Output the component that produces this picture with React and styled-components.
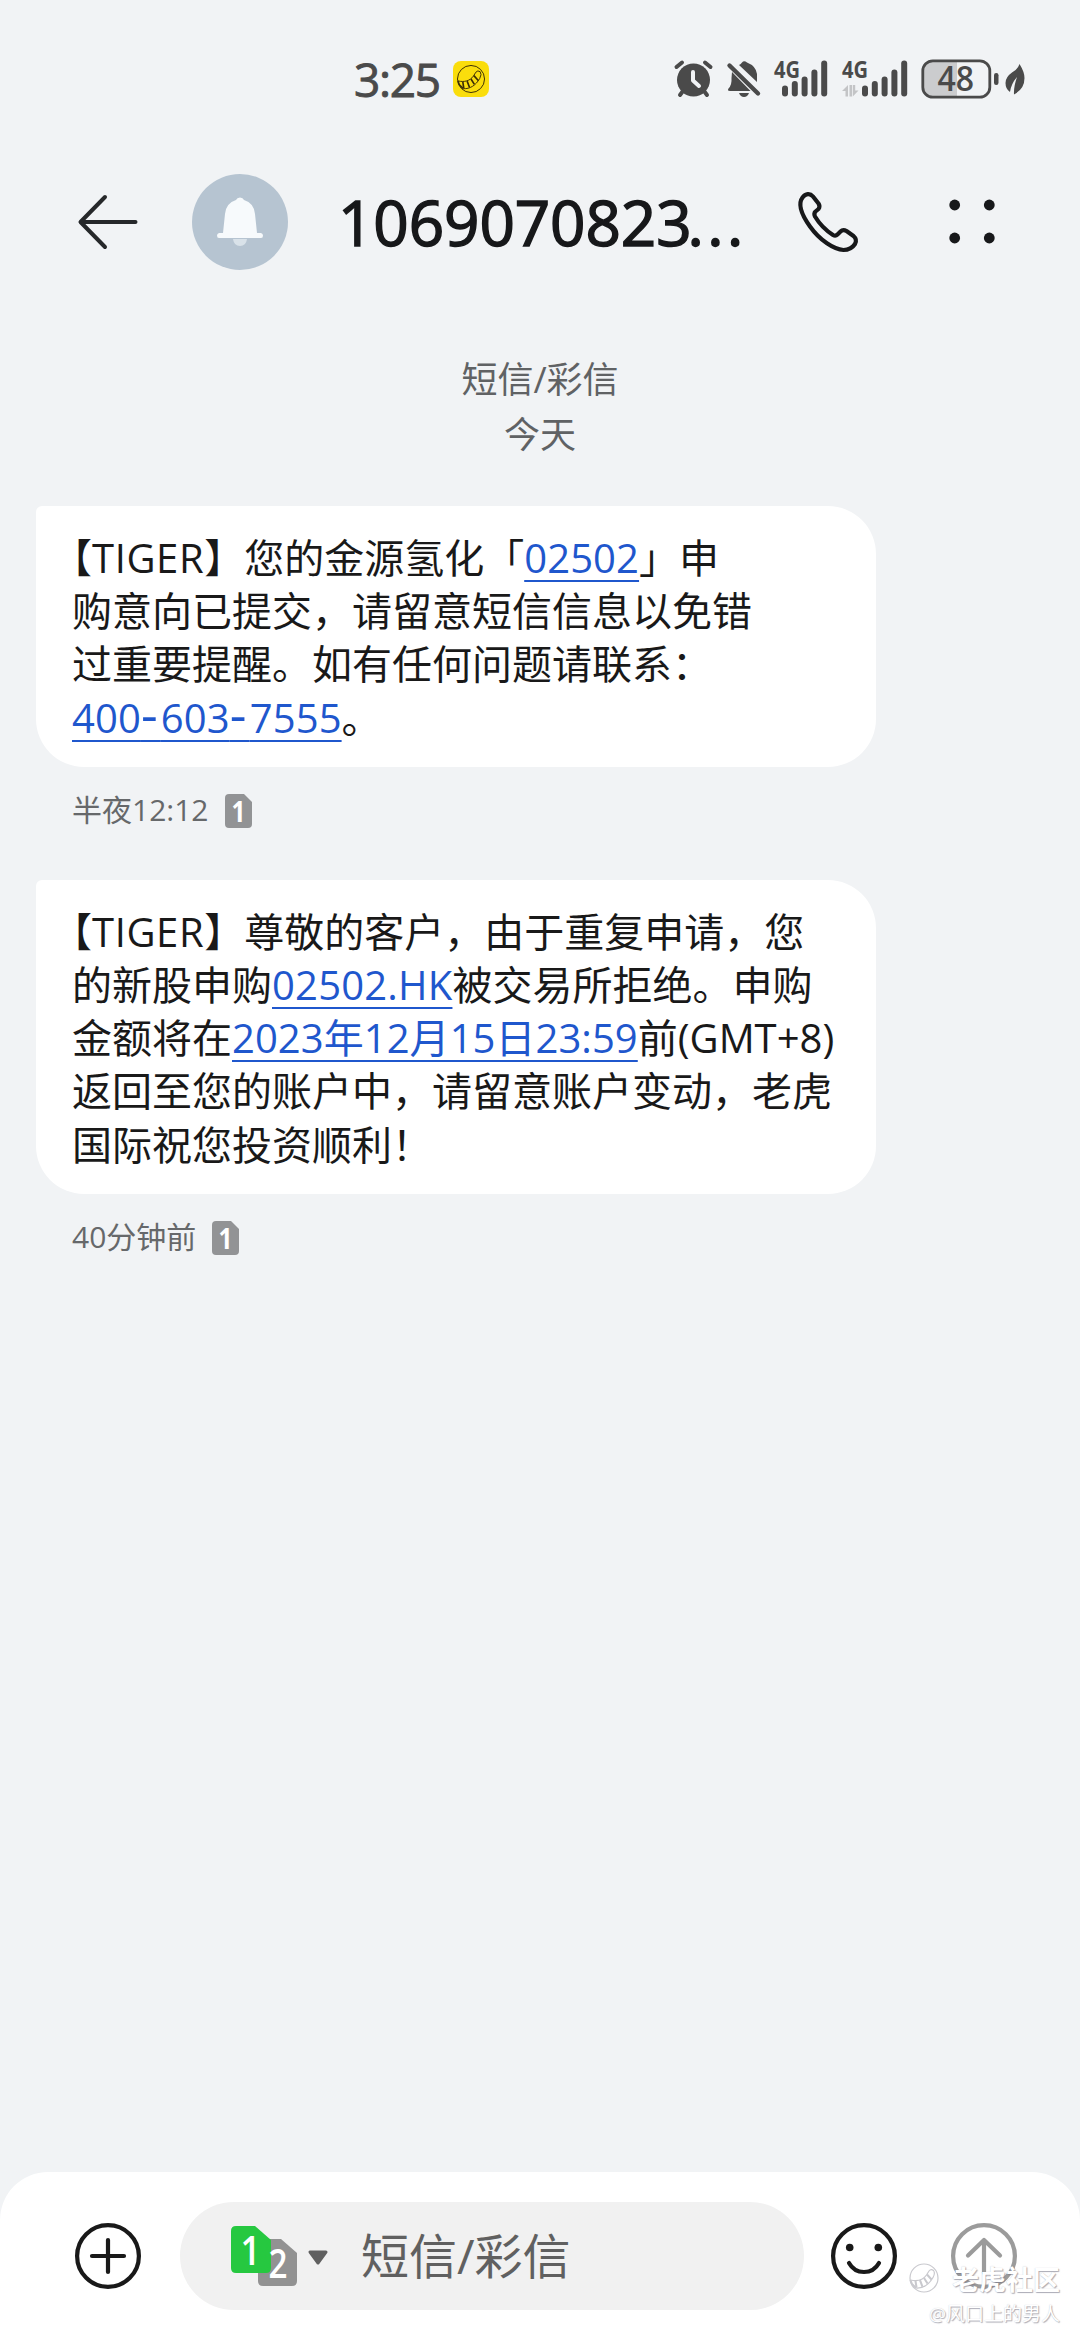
import React from 'react';
import styled, { createGlobalStyle } from 'styled-components';

const Global = createGlobalStyle`
  * { box-sizing: border-box; }
  body { margin: 0; background: #f1f3f5; }
  svg { display: block; flex: none; overflow: visible; }
`;

const FONT = '"Open Sans", "Noto Sans CJK SC", sans-serif';

const Screen = styled.div`
  width: 1080px;
  height: 2340px;
  display: flex;
  flex-direction: column;
  background: #f1f3f5;
  color: #191919;
  font-family: ${FONT};
  overflow: hidden;
  white-space: nowrap;
`;

const StatusBar = styled.header`
  height: 158px;
  padding: 0 54px 0 354px;
  display: flex;
  align-items: center;
  color: #4a4a4a;
`;

const Clock = styled.time`
  width: 99px;
  font-size: 46px;
  font-weight: 500;
  line-height: 60px;
  letter-spacing: -1.3px;
  -webkit-text-stroke: 0.9px currentColor;
`;

const StatusIcons = styled.div`
  margin-left: auto;
  display: flex;
  align-items: center;
`;

const TitleBar = styled.div`
  height: 128px;
  display: flex;
  align-items: center;
  padding: 0 85px 0 76px;
`;

const Avatar = styled.div`
  width: 96px;
  height: 96px;
  margin: 0 50px 0 52px;
  border-radius: 50%;
  background: #b6c4d1;
  display: flex;
  align-items: center;
  justify-content: center;
`;

const Title = styled.h1`
  flex: 1;
  margin: 0;
  font-size: 62px;
  font-weight: 500;
  line-height: 80px;
  letter-spacing: -0.1px;
  color: #17181a;
  -webkit-text-stroke: 1.5px currentColor;
`;

const Dots = styled.span`
  margin-left: -4px;
  letter-spacing: 3.5px;
`;

const Intro = styled.div`
  margin-top: 66px;
  text-align: center;
  font-size: 36px;
  line-height: 55px;
  color: #606264;
`;

const Thread = styled.main`
  flex: 1;
  padding: 44px 36px 0;
  display: flex;
  flex-direction: column;
  align-items: flex-start;
`;

const Bubble = styled.article`
  width: 840px;
  padding: 25px 36px 23px;
  border-radius: 6px 48px 48px 48px;
  background: #fff;
  font-size: 40px;
  line-height: 53.2px;
`;

const Line = styled.div`
  height: 53.2px;
`;

const Half = styled.span`
  font-feature-settings: "halt";
`;

const Run = styled.span`
  letter-spacing: ${(p) => p.$ls || 0}px;
`;

const Hyphen = styled.span`
  font-size: 52px;
  line-height: 0;
  letter-spacing: 3.2px;
`;

const Link = styled.a`
  color: #1f57cd;
  text-decoration: underline;
  text-decoration-thickness: 2.4px;
  text-decoration-skip-ink: none;
  text-underline-offset: 7px;
  letter-spacing: ${(p) => p.$ls || 0}px;
`;

const Meta = styled.div`
  height: 113px;
  padding: 0 36px 25px;
  display: flex;
  align-items: center;
  gap: 16px;
  font-size: 30px;
  color: #66686a;
`;

const Stamp = styled.span`
  line-height: 40px;
  padding-bottom: 1px;
`;

const Composer = styled.footer`
  position: relative;
  height: 168px;
  padding: 30px 63px 0 75px;
  display: flex;
  align-items: flex-start;
  background: #fff;
  border-radius: 48px 48px 0 0;
`;

const RoundButton = styled.div`
  width: 66px;
  height: 108px;
  display: flex;
  align-items: center;
`;

const Field = styled.div`
  width: 624px;
  height: 108px;
  margin: 0 27px 0 39px;
  padding-left: 51px;
  border-radius: 54px;
  background: #f1f1f1;
  display: flex;
  align-items: center;
  font-size: 48px;
  color: #606060;
`;

const Placeholder = styled.span`
  margin-left: 32px;
  line-height: 60px;
`;

const Watermark = styled.div`
  position: absolute;
  right: 20px;
  top: 85px;
  display: flex;
  flex-direction: column;
  align-items: flex-end;
  color: #fff;
  text-shadow: 1px 1px 1px rgba(120, 120, 135, 0.6), 0 0 1px rgba(120, 120, 135, 0.4);
`;

const Brand = styled.div`
  display: flex;
  align-items: center;
  gap: 13px;
  height: 42px;
  font-size: 27px;
  font-weight: 700;
`;

const Author = styled.div`
  font-size: 19px;
  line-height: 30px;
`;

function TigerMark({ size, color, width }) {
  return (
    <svg width={size} height={size} viewBox="0 0 30 30" fill="none" stroke={color} strokeWidth={width}>
      <circle cx="15" cy="15" r="14" />
      <path d="M1.5 17C8 18.5 14 17 17.500 12L20 8Q22 5.500 24.500 7.500Q26.500 10 24 14.500C20 21.500 14 25.500 7 25" />
      <path d="M6.500 17.800L7.500 24.500M11 17.200L13.500 23.800M15 15L18.500 20.500M18 11.500L22.500 16.500" strokeWidth={width * 1.7} />
      <path d="M1.500 17L3 21L7 25" strokeWidth={width * 1.6} />
    </svg>
  );
}

function AppBadge() {
  return (
    <svg width="36" height="36" viewBox="0 0 36 36">
      <rect width="36" height="36" rx="8" fill="#fadd0c" />
      <g transform="translate(3.500 3.500)"><TigerMark size={29} color="#3a2d05" width={1} /></g>
    </svg>
  );
}

function Alarm() {
  return (
    <svg width="39" height="38" viewBox="0 0 39 38" fill="none" stroke="#4a4a4a" strokeLinecap="round">
      <circle cx="19.500" cy="20" r="16.500" fill="#4a4a4a" stroke="none" />
      <path d="M2.500 7L8 2.500M36.500 7L31 2.500M9 31L6 35M30 31L33 35" strokeWidth="4" />
      <path d="M19 12V20.500L25 26" stroke="#f1f3f5" strokeWidth="4" strokeLinejoin="round" />
    </svg>
  );
}

function BellOff() {
  return (
    <svg width="34" height="38" viewBox="0 0 34 38">
      <path d="M5 12L23.500 31H3Q0 31 1.500 28.500Q5 25 4.500 18Z" fill="#4a4a4a" />
      <path d="M12 5Q14 4 15 2.500Q17 0 20 2.500Q29 6 30 14V22Z" fill="#4a4a4a" />
      <path d="M12 33H22Q20.500 37 17 37Q13.500 37 12 33Z" fill="#4a4a4a" />
      <path d="M2.500 5.500L31 33.500" stroke="#4a4a4a" strokeWidth="4.400" strokeLinecap="round" />
    </svg>
  );
}

function Signal({ offset, data }) {
  const tops = [25, 20.500, 16, 9, 0];
  return (
    <svg width={offset + 46} height="38" viewBox={`0 0 ${offset + 46} 38`}>
      <text x="0" y="17.500" fontFamily="Open Sans" fontSize="24" fontWeight="700" fill="#4a4a4a" textLength="26" lengthAdjust="spacingAndGlyphs">4G</text>
      {data && (
        <path d="M0 31L6 25V36.500H3.500V31ZM7.500 25H10V36.500H7.500ZM10.800 25H13.200V30.500H16.500L10.800 36.500Z" fill="#c3c4c6" />
      )}
      {tops.map((t, i) => (
        <rect key={t} x={offset + i * 9.800} y={t + 0.500} width="6" height={36 - t} rx="3" fill="#4a4a4a" />
      ))}
    </svg>
  );
}

function Battery() {
  return (
    <svg width="78" height="40" viewBox="0 0 78 40">
      <path d="M36 2H12Q2 2 2 12V28Q2 38 12 38H36Z" fill="#cbccce" />
      <rect x="1.800" y="1.800" width="67" height="36.400" rx="10" fill="none" stroke="#4a4a4a" strokeWidth="2.800" />
      <text x="16.500" y="32" fontFamily="Open Sans" fontSize="33.500" fontWeight="600" fill="#4a4a4a" textLength="36.500" lengthAdjust="spacingAndGlyphs">48</text>
      <rect x="73" y="14" width="4.500" height="12" rx="2.200" fill="#4a4a4a" />
    </svg>
  );
}

function Leaf() {
  return (
    <svg width="21" height="31" viewBox="0 0 21 31">
      <path d="M14.500 0Q19.500 8 19.500 14Q19.500 25 9 30.500Q8.500 23 12 13Q6 20 5 28Q0.500 25 0.500 19Q0.500 13 7 8.500Q13 5 14.500 0Z" fill="#4a4a4a" />
    </svg>
  );
}

function Back() {
  return (
    <svg width="64" height="60" viewBox="0 0 64 60" fill="none" stroke="#26282a" strokeWidth="4" strokeLinecap="round" strokeLinejoin="round">
      <path d="M29 5L4.500 30L29 55M5 30H59.500" />
    </svg>
  );
}

function Bell() {
  return (
    <svg width="46" height="50" viewBox="0 0 46 50">
      <path d="M16 42H30Q29 49 23 49Q17 49 16 42Z" fill="#d9e2e9" />
      <path d="M23 0.500Q26 0.500 27 3Q37 6 38 17L40 36H44Q46 36.500 46 38.500Q46 41 44 41H2Q0 41 0 38.500Q0 36.500 2 36H6L8 17Q9 6 19 3Q20 0.500 23 0.500Z" fill="#f7fafc" />
    </svg>
  );
}

function Phone() {
  return (
    <svg width="60" height="60" viewBox="0 0 60 60" fill="none" stroke="#17181a" strokeWidth="4.200" strokeLinejoin="round">
      <path d="M4.500 5.500C7.500 1.500 12 1 15 4.500L20.500 11.500Q22.500 14.500 20.500 17L17.500 19.500Q15.500 21.500 17 24.500C21.500 32 28 38.500 35 43Q37.500 44.500 39.500 42.500L42.500 39.500Q45 37 48.500 39L55.500 44Q59.500 47.500 57 52Q53 58 45.500 58C36 57.500 22 48.500 12 34.500C2 20.500 0 11.500 4.500 5.500Z" />
    </svg>
  );
}

function More() {
  return (
    <svg width="46" height="46" viewBox="0 0 46 46" fill="#17181a">
      <circle cx="5.700" cy="6" r="5.400" /><circle cx="40.300" cy="6" r="5.400" />
      <circle cx="5.700" cy="39" r="5.400" /><circle cx="40.300" cy="39" r="5.400" />
    </svg>
  );
}

function SimTag() {
  return (
    <svg width="27" height="34" viewBox="0 0 27 34">
      <path d="M4 0H19L27 8V30Q27 34 23 34H4Q0 34 0 30V4Q0 0 4 0Z" fill="#929395" />
      <text x="6.500" y="27.500" fontFamily="Open Sans" fontSize="29" fontWeight="700" fill="#fff" textLength="14" lengthAdjust="spacingAndGlyphs">1</text>
    </svg>
  );
}

function SimSwitch() {
  return (
    <svg width="98" height="60" viewBox="0 0 98 60">
      <path d="M31 13H50L66 27V55Q66 60 61 60H32Q27 60 27 55V17Q27 13 31 13Z" fill="#929292" />
      <path d="M5 0H24L40 14V42Q40 47 35 47H5Q0 47 0 42V5Q0 0 5 0Z" fill="#26c840" />
      <text x="9.500" y="39" fontFamily="Open Sans" fontSize="40" fontWeight="600" fill="#fff" textLength="20" lengthAdjust="spacingAndGlyphs">1</text>
      <text x="37.500" y="52" fontFamily="Open Sans" fontSize="39" fontWeight="600" fill="#fff" textLength="19" lengthAdjust="spacingAndGlyphs">2</text>
      <path d="M79 26H95L87 37Z" fill="#606060" stroke="#606060" strokeWidth="3" strokeLinejoin="round" />
    </svg>
  );
}

function Plus() {
  return (
    <svg width="66" height="66" viewBox="0 0 66 66" fill="none" stroke="#191919" strokeWidth="4.200" strokeLinecap="round">
      <circle cx="33" cy="33" r="30.900" />
      <path d="M33 17V49M17 33H49" />
    </svg>
  );
}

function Smile() {
  return (
    <svg width="66" height="66" viewBox="0 0 66 66" fill="none" stroke="#191919" strokeWidth="4.200" strokeLinecap="round">
      <circle cx="33" cy="33" r="30.900" />
      <path d="M18 40Q23 49 33 49Q43 49 48 40" />
      <g fill="#191919" stroke="none"><circle cx="18.700" cy="24.500" r="3.800" /><circle cx="47.300" cy="24.500" r="3.800" /></g>
    </svg>
  );
}

function Send() {
  return (
    <svg width="66" height="66" viewBox="0 0 66 66" fill="none" stroke="#9b9b9b" strokeWidth="4.200" strokeLinecap="round" strokeLinejoin="round">
      <circle cx="33" cy="33" r="30.900" />
      <path d="M33 50V17M17 32.500L33 17L49 32.500" />
    </svg>
  );
}

const Gap = styled.span`
  width: ${(p) => p.$w}px;
`;

export default function App() {
  return (
    <Screen>
      <Global />
      <StatusBar>
        <Clock>3:25</Clock>
        <AppBadge />
        <StatusIcons>
          <Alarm />
          <Gap $w={14} />
          <BellOff />
          <Gap $w={13} />
          <Signal offset={8} />
          <Gap $w={14} />
          <Signal offset={20} data />
          <Gap $w={13} />
          <Battery />
          <Gap $w={6} />
          <Leaf />
        </StatusIcons>
      </StatusBar>
      <TitleBar>
        <Back />
        <Avatar><Bell /></Avatar>
        <Title>1069070823<Dots>...</Dots></Title>
        <Phone />
        <Gap $w={91} />
        <More />
      </TitleBar>
      <Intro>
        <div>短信/彩信</div>
        <div>今天</div>
      </Intro>
      <Thread>
        <Bubble>
          <Line><Half>【</Half><Run $ls={0.6}>TIGER</Run>】您的金源氢化「<Link $ls={0.1}>02502</Link>」申</Line>
          <Line>购意向已提交，请留意短信信息以免错</Line>
          <Line>过重要提醒。如有任何问题请联系：</Line>
          <Line><Link $ls={0.1}>400<Hyphen>-</Hyphen>603<Hyphen>-</Hyphen>7555</Link>。</Line>
        </Bubble>
        <Meta><Stamp>半夜12:12</Stamp><SimTag /></Meta>
        <Bubble>
          <Line><Half>【</Half><Run $ls={0.6}>TIGER</Run>】尊敬的客户，由于重复申请，您</Line>
          <Line>的新股申购<Link $ls={0.2}>02502.HK</Link>被交易所拒绝。申购</Line>
          <Line>金额将在<Link $ls={0.05}>2023年12月15日23:59</Link>前(GMT+8)</Line>
          <Line>返回至您的账户中，请留意账户变动，老虎</Line>
          <Line>国际祝您投资顺利！</Line>
        </Bubble>
        <Meta><Stamp>40分钟前</Stamp><SimTag /></Meta>
      </Thread>
      <Composer>
        <RoundButton><Plus /></RoundButton>
        <Field>
          <SimSwitch />
          <Placeholder>短信/彩信</Placeholder>
        </Field>
        <RoundButton><Smile /></RoundButton>
        <Gap $w={54} />
        <RoundButton><Send /></RoundButton>
        <Watermark>
          <Brand><TigerMark size={30} color="#c9c9ce" width={1.2} />老虎社区</Brand>
          <Author>@风口上的男人</Author>
        </Watermark>
      </Composer>
    </Screen>
  );
}
